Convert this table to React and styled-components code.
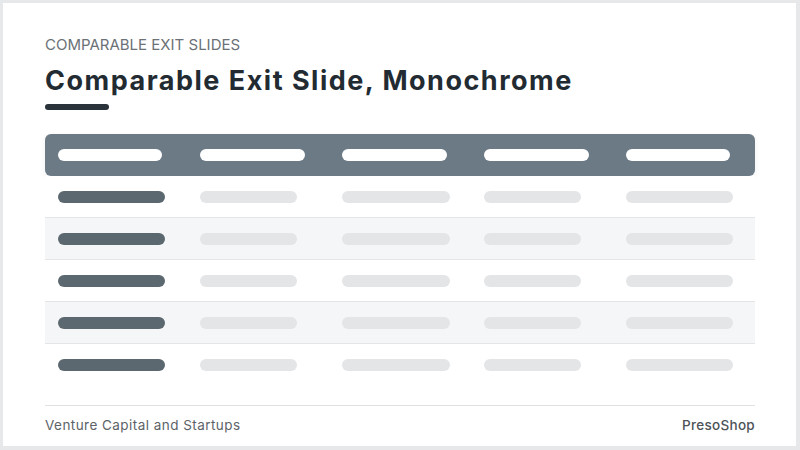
import React from 'react';
import styled, { createGlobalStyle } from 'styled-components';

const GlobalStyle = createGlobalStyle`
    html, body {
        margin: 0;
        padding: 0;
        background: #e6e8ea;
    }
    body {
        font-family: Inter, "Noto Sans", "Liberation Sans", sans-serif;
    }
`;

// widths of the placeholder bars, column by column
const HEAD_WIDTHS = [104, 105, 105, 105, 104];
const BODY_WIDTHS = [107, 97, 108, 97, 107];
const ROWS = 5;

const App = () => {
    return (
        <>
            <GlobalStyle />
            <Frame>
                <Slide>
                    <Header>
                        <Kicker>Comparable Exit Slides</Kicker>
                        <Title>Comparable Exit Slide, Monochrome</Title>
                        <Accent />
                    </Header>

                    <Table>
                        <HeadRow>
                            {HEAD_WIDTHS.map((w, i) => (
                                <Cell key={i}>
                                    <Pill $tone="head" $width={w} />
                                </Cell>
                            ))}
                        </HeadRow>
                        {Array.from({ length: ROWS }).map((_, r) => (
                            <Row key={r} $striped={r % 2 === 1} $last={r === ROWS - 1}>
                                {BODY_WIDTHS.map((w, c) => (
                                    <Cell key={c}>
                                        <Pill $tone={c === 0 ? "dark" : "light"} $width={w} />
                                    </Cell>
                                ))}
                            </Row>
                        ))}
                    </Table>

                    <Footer>
                        <span>Venture Capital and Startups</span>
                        <Brand>PresoShop</Brand>
                    </Footer>
                </Slide>
            </Frame>
        </>
    );
};

const Frame = styled.div`
    width: 800px;
    height: 450px;
    box-sizing: border-box;
    padding: 3px 4px 4px 3px;
`;

const Slide = styled.div`
    height: 100%;
    box-sizing: border-box;
    background: #ffffff;
    padding: 31px 41px 0 42px;
    display: flex;
    flex-direction: column;
`;

const Header = styled.div`
    display: flex;
    flex-direction: column;
`;

const Kicker = styled.div`
    font-size: 15px;
    line-height: 22px;
    font-weight: 400;
    text-transform: uppercase;
    color: #6b7176;
`;

const Title = styled.h1`
    margin: 7px 0 0;
    font-size: 27px;
    line-height: 36px;
    font-weight: 700;
    letter-spacing: 1.5px;
    color: #232b32;
`;

const Accent = styled.div`
    width: 64px;
    height: 6px;
    border-radius: 3px;
    background: #2a333a;
    margin-top: 5px;
`;

const Table = styled.div`
    margin-top: 24px;
    display: flex;
    flex-direction: column;
`;

const HeadRow = styled.div`
    display: grid;
    grid-template-columns: repeat(5, 1fr);
    height: 42px;
    background: #6c7a86;
    border-radius: 6px;
    box-shadow: 0 2px 6px rgba(40, 50, 60, 0.08);
`;

const Row = styled.div`
    display: grid;
    grid-template-columns: repeat(5, 1fr);
    height: 42px;
    background: ${p => (p.$striped ? '#f5f6f7' : '#ffffff')};
    border-bottom: ${p => (p.$last ? 'none' : '1px solid #e3e5e7')};
    box-sizing: border-box;
`;

const Cell = styled.div`
    display: flex;
    align-items: center;
    padding-left: 13px;
`;

const pillColors = { head: '#ffffff', dark: '#5c686f', light: '#e3e5e7' };

const Pill = styled.div`
    width: ${p => p.$width}px;
    height: 12px;
    border-radius: 6px;
    background: ${p => pillColors[p.$tone]};
`;

const Footer = styled.div`
    margin-top: auto;
    margin-bottom: 12px;
    border-top: 1px solid #dfe1e3;
    padding-top: 10px;
    display: flex;
    justify-content: space-between;
    font-size: 13.5px;
    line-height: 18px;
    letter-spacing: 0.45px;
    color: #5c6368;
`;

const Brand = styled.span`
    font-weight: 500;
    letter-spacing: 0.3px;
    color: #4d5358;
`;

export default App;
